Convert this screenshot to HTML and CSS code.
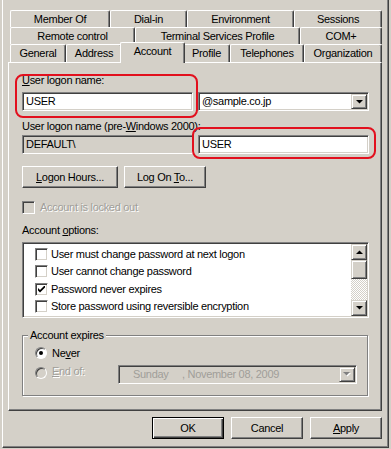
FILE: index.html
```html
<!DOCTYPE html>
<html lang="en">
<head>
    <meta charset="UTF-8">
    <title>USER Properties</title>
    <link rel="stylesheet" href="styles.css">
</head>
<body>
<div class="dialog">
    <div class="tabs">
        <div class="tab-row">
            <div class="tab tab-member">Member Of</div>
            <div class="tab tab-dialin">Dial-in</div>
            <div class="tab tab-env">Environment</div>
            <div class="tab tab-sessions">Sessions</div>
        </div>
        <div class="tab-row">
            <div class="tab tab-remote">Remote control</div>
            <div class="tab tab-terminal">Terminal Services Profile</div>
            <div class="tab tab-com">COM+</div>
        </div>
        <div class="tab-row front">
            <div class="tab tab-general">General</div>
            <div class="tab tab-address">Address</div>
            <div class="tab tab-account active">Account</div>
            <div class="tab tab-profile">Profile</div>
            <div class="tab tab-phones">Telephones</div>
            <div class="tab tab-org">Organization</div>
        </div>
    </div>

    <div class="panel">
        <div class="label"><u>U</u>ser logon name:</div>
        <div class="field-row">
            <div class="field">USER</div>
            <div class="field combo">
                <span>@sample.co.jp</span>
                <span class="drop-btn"><svg width="7" height="4" viewBox="0 0 7 4"><polygon points="0,0 7,0 3.5,3.6" fill="#000"/></svg></span>
            </div>
        </div>

        <div class="label label-pre">User logon name (pre-<u>W</u>indows 2000):</div>
        <div class="field-row tight">
            <div class="field readonly">DEFAULT\</div>
            <div class="field">USER</div>
        </div>

        <div class="btn-row">
            <button class="btn btn-hours"><u>L</u>ogon Hours...</button>
            <button class="btn btn-logon">Log On <u>T</u>o...</button>
        </div>

        <div class="check-row disabled">
            <span class="checkbox"></span>
            <span class="dim">Account is locked out</span>
        </div>

        <div class="label label-options">Account <u>o</u>ptions:</div>
        <div class="listbox">
            <div class="options">
                <div class="option"><span class="checkbox"></span>User must change password at next logon</div>
                <div class="option"><span class="checkbox"></span>User cannot change password</div>
                <div class="option"><span class="checkbox"><svg width="7" height="7" viewBox="0 0 7 7"><path d="M0 2 L2 4 L7 -1 L7 1.6 L2 6.6 L0 4.6 Z" fill="#000"/></svg></span>Password never expires</div>
                <div class="option"><span class="checkbox"></span>Store password using reversible encryption</div>
            </div>
            <div class="scrollbar">
                <div class="scroll-btn"><svg width="7" height="4" viewBox="0 0 7 4"><polygon points="0,4 7,4 3.5,0.4" fill="#000"/></svg></div>
                <div class="scroll-thumb"></div>
                <div class="scroll-track"></div>
                <div class="scroll-btn"><svg width="7" height="4" viewBox="0 0 7 4"><polygon points="0,0 7,0 3.5,3.6" fill="#000"/></svg></div>
            </div>
        </div>

        <fieldset class="expires">
            <legend>Account expires</legend>
            <div class="radio-row">
                <span class="radio checked"></span>
                <span>Ne<u>v</u>er</span>
            </div>
            <div class="radio-row end">
                <span class="radio off"></span>
                <span class="dim"><u>E</u>nd of:</span>
                <div class="datepicker">
                    <span class="day">Sunday</span><span>, November 08, 2009</span>
                    <span class="drop-btn"><svg width="8" height="5" viewBox="0 0 8 5"><polygon points="1,1 8,1 4.5,4.6" fill="#fff"/><polygon points="0,0 7,0 3.5,3.6" fill="#808080"/></svg></span>
                </div>
            </div>
        </fieldset>

        <div class="highlight hl-logon"></div>
        <div class="highlight hl-pre"></div>
    </div>

    <div class="dialog-buttons">
        <button class="btn default">OK</button>
        <button class="btn">Cancel</button>
        <button class="btn"><u>A</u>pply</button>
    </div>
</div>
</body>
</html>
```

FILE: styles.css
```css
* { margin: 0; padding: 0; box-sizing: border-box; }
body {
    background: #d4d0c8;
    padding-left: 2px;
    font: 11px/13px "Liberation Sans", Arial, sans-serif;
    letter-spacing: -0.3px;
    color: #000;
}
u { text-decoration: underline; }

.dialog {
    width: 387px;
    height: 448px;
    padding: 10px 0 0 5px;
    border-left: 1px solid #fff;
    border-right: 1px solid #404040;
    border-bottom: 1px solid #404040;
    box-shadow: inset -1px -1px #808080;
}

/* tabs */
.tabs { margin-left: 2px; width: 372px; }
.tab-row { display: flex; align-items: flex-start; }
.tab {
    height: 17px;
    border-top: 1px solid #fff;
    border-left: 1px solid #fff;
    border-right: 1px solid #404040;
    box-shadow: inset -1px 0 #808080;
    border-radius: 2px 2px 0 0;
    text-align: center;
    line-height: 16px;
    white-space: nowrap;
    background: #d4d0c8;
}
.tab-row.front .tab { height: 18px; line-height: 17px; }
.tab-row.front .tab.active {
    height: 21px;
    width: 65px;
    margin: -2px -2px -1px;
    position: relative;
    z-index: 1;
    line-height: 17px;
}
.tab-member { width: 100px; }
.tab-dialin { width: 77px; }
.tab-env { width: 107px; }
.tab-sessions { width: 88px; }
.tab-remote { width: 125px; }
.tab-terminal { width: 165px; }
.tab-com { width: 82px; }
.tab-general { width: 56px; }
.tab-address { width: 56px; }
.tab-account { width: 61px; }
.tab-profile { width: 47px; }
.tab-phones { width: 74px; }
.tab-org { width: 78px; }

/* page */
.panel {
    position: relative;
    width: 374px;
    height: 349px;
    padding: 11px 12px 0 13px;
    border: 1px solid;
    border-color: #fff #404040 #404040 #fff;
    box-shadow: inset -1px -1px #808080;
}
.label-pre { margin-top: 9px; }
.label-options { margin-top: 10px; }

.field-row { display: flex; gap: 5px; margin-top: 5px; }
.field-row.tight { margin-top: 2px; }
.field {
    width: 171px;
    height: 19px;
    border: 1px solid;
    border-color: #808080 #fff #fff #808080;
    box-shadow: inset 1px 1px #404040, inset -1px -1px #d4d0c8;
    background: #fff;
    padding: 0 3px;
    line-height: 17px;
    white-space: nowrap;
}
.field.readonly { background: #d4d0c8; }
.combo { display: flex; justify-content: space-between; padding-right: 1px; }

.drop-btn {
    display: flex;
    align-items: center;
    justify-content: center;
    width: 16px;
    height: 15px;
    margin-top: 1px;
    border: 1px solid;
    border-color: #d4d0c8 #404040 #404040 #d4d0c8;
    box-shadow: inset 1px 1px #fff, inset -1px -1px #808080;
    background: #d4d0c8;
}

.btn {
    height: 22px;
    border: 1px solid;
    border-color: #fff #404040 #404040 #fff;
    box-shadow: inset -1px -1px #808080;
    background: #d4d0c8;
    font: inherit;
    letter-spacing: inherit;
    color: #000;
    text-align: center;
    line-height: 20px;
}
.btn-row { display: flex; gap: 6px; margin-top: 12px; }
.btn-hours { width: 96px; }
.btn-logon { width: 82px; }

.checkbox {
    display: flex;
    align-items: center;
    justify-content: center;
    flex: none;
    width: 13px;
    height: 13px;
    border: 1px solid;
    border-color: #808080 #fff #fff #808080;
    box-shadow: inset 1px 1px #404040, inset -1px -1px #d4d0c8;
    background: #fff;
}
.check-row { display: flex; align-items: center; gap: 5px; height: 13px; margin-top: 13px; }
.check-row.disabled .checkbox { background: #d4d0c8; }
.dim { color: #a09e99; text-shadow: 1px 1px #fff; }

/* list */
.listbox {
    display: flex;
    height: 76px;
    margin-top: 5px;
    padding: 1px;
    border: 1px solid;
    border-color: #808080 #fff #fff #808080;
    box-shadow: inset 1px 1px #404040, inset -1px -1px #d4d0c8;
    background: #fff;
}
.options { flex: 1; padding: 1px 0 0 11px; overflow: hidden; }
.option { display: flex; align-items: center; gap: 3px; height: 18px; white-space: nowrap; }
.option:nth-child(even) { height: 17px; }
.scrollbar { display: flex; flex-direction: column; width: 16px; }
.scroll-btn, .scroll-thumb {
    display: flex;
    align-items: center;
    justify-content: center;
    height: 16px;
    border: 1px solid;
    border-color: #d4d0c8 #404040 #404040 #d4d0c8;
    box-shadow: inset 1px 1px #fff, inset -1px -1px #808080;
    background: #d4d0c8;
}
.scroll-thumb { height: 19px; }
.scroll-track {
    flex: 1;
    background: repeating-conic-gradient(#fff 0 25%, #d4d0c8 0 50%) 0 0 / 2px 2px;
}

/* account expires */
.expires {
    width: 346px;
    margin-top: 11px;
    padding: 2px 10px 11px 12px;
    border: 1px solid #808080;
    box-shadow: inset 1px 1px #fff, 1px 1px #fff;
}
.expires legend {
    margin-left: -7px;
    padding: 0 2px;
    background: #d4d0c8;
}
.radio-row { display: flex; align-items: center; gap: 5px; height: 18px; }
.radio-row.end { align-items: flex-start; height: 19px; margin-top: 3px; }
.radio-row.end .radio { margin-top: 2px; }
.radio {
    position: relative;
    flex: none;
    width: 12px;
    height: 12px;
    border-radius: 50%;
    border: 1px solid;
    border-color: #808080 #fff #fff #808080;
    box-shadow: inset 1px 1px #404040;
    background: #fff;
}
.radio.checked::after {
    content: '';
    position: absolute;
    left: 3px;
    top: 3px;
    width: 4px;
    height: 4px;
    border-radius: 50%;
    background: #000;
}
.radio.off { background: #d4d0c8; }

.datepicker {
    display: flex;
    width: 239px;
    height: 19px;
    margin-left: auto;
    padding: 0 1px 0 14px;
    border: 1px solid;
    border-color: #808080 #fff #fff #808080;
    box-shadow: inset 1px 1px #404040, inset -1px -1px #d4d0c8;
    color: #a09e99;
    line-height: 17px;
    white-space: nowrap;
}
.datepicker .day { width: 49px; }
.datepicker .drop-btn { margin-left: auto; }

/* red callouts */
.highlight {
    position: absolute;
    border: 2px solid #e2101e;
    border-radius: 8px;
}
.hl-logon { left: 6px; top: 11px; width: 183px; height: 44px; }
.hl-pre { left: 183px; top: 64px; width: 184px; height: 32px; }

.dialog-buttons {
    display: flex;
    justify-content: flex-end;
    gap: 7px;
    width: 374px;
    margin-top: 6px;
}
.dialog-buttons .btn { width: 72px; }
.btn.default {
    border-color: #000;
    box-shadow: inset 1px 1px #fff, inset -1px -1px #404040, inset -2px -2px #808080;
}
```
